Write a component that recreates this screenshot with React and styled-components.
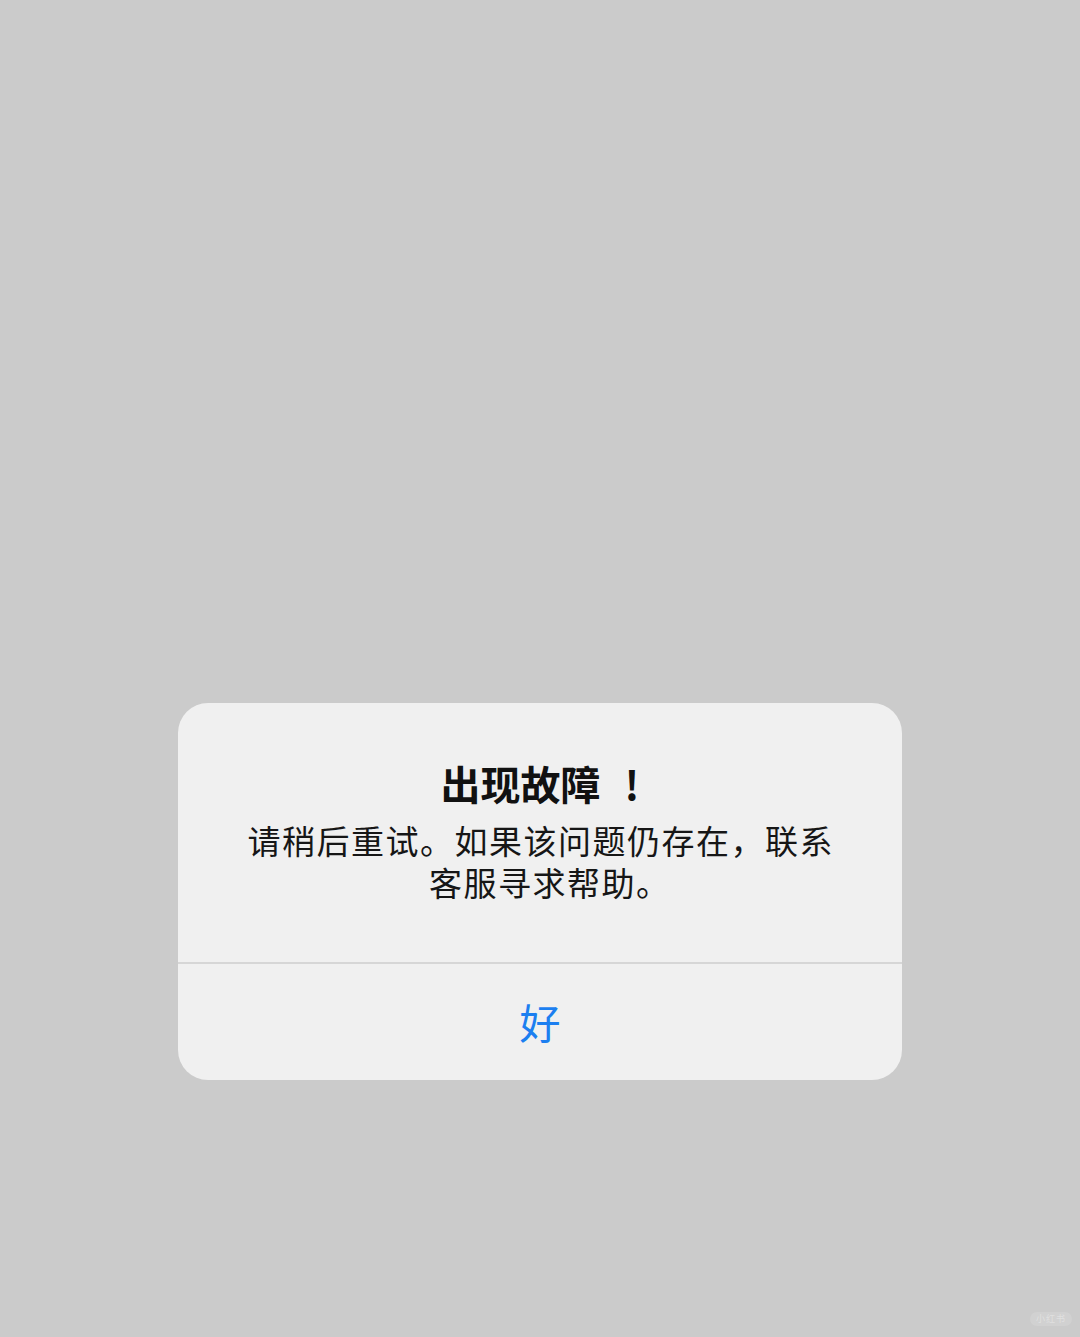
import React from "react";
import styled, { createGlobalStyle } from "styled-components";

const GlobalStyle = createGlobalStyle`
  html, body {
    margin: 0;
    padding: 0;
    background: #cbcbcb;
  }
  body {
    font-family: "PingFang SC", "Noto Sans CJK SC", "Noto Sans", sans-serif;
  }
  * { box-sizing: border-box; }
`;

const Screen = styled.div`
  position: relative;
  width: 1080px;
  height: 1337px;
  background: #cbcbcb;
  display: flex;
  flex-direction: column;
  align-items: center;
  padding-top: 703px;
  overflow: hidden;
`;

const Alert = styled.div`
  width: 724px;
  height: 377px;
  background: #f0f0f0;
  border-radius: 30px;
  display: flex;
  flex-direction: column;
  overflow: hidden;
`;

const Body = styled.div`
  height: 259px;
  display: flex;
  flex-direction: column;
  align-items: center;
  padding-top: 52px;
  text-align: center;
`;

const Title = styled.h1`
  margin: 0;
  font-size: 40px;
  line-height: 56px;
  font-weight: 700;
  color: #111111;
`;

/* the exclamation sits a little apart from the last character */
const Bang = styled.span`
  margin-left: 24px;
`;

const Message = styled.p`
  margin: 8px 0 0;
  padding-left: 1.5px;
  font-size: 33px;
  line-height: 42px;
  letter-spacing: 1.5px;
  font-weight: 400;
  color: #161616;
  white-space: nowrap;
`;

/* full stop at the end of a line uses its half-width form */
const EndStop = styled.span`
  font-feature-settings: "halt" 1;
  letter-spacing: 0;
`;

const Divider = styled.div`
  height: 2px;
  background: #d6d6d6;
`;

const ActionButton = styled.button`
  flex: 1;
  border: none;
  background: transparent;
  margin: 0;
  padding: 0 0 2px;
  font-family: inherit;
  font-size: 41px;
  line-height: 1;
  color: #1c7ff0;
  cursor: pointer;
`;

const Watermark = styled.div`
  position: absolute;
  right: 8px;
  bottom: 11px;
  height: 14px;
  padding: 0 6px;
  border-radius: 7px;
  background: rgba(255, 255, 255, 0.12);
  color: rgba(255, 255, 255, 0.35);
  font-size: 9px;
  line-height: 14px;
  letter-spacing: 1px;
`;

export default function App() {
  return (
    <>
      <GlobalStyle />
      <Screen>
        <Alert role="alertdialog">
          <Body>
            <Title>
              出现故障<Bang>!</Bang>
            </Title>
            <Message>
              请稍后重试。如果该问题仍存在，联系
              <br />
              客服寻求帮助<EndStop>。</EndStop>
            </Message>
          </Body>
          <Divider />
          <ActionButton>好</ActionButton>
        </Alert>
        <Watermark>小红书</Watermark>
      </Screen>
    </>
  );
}
